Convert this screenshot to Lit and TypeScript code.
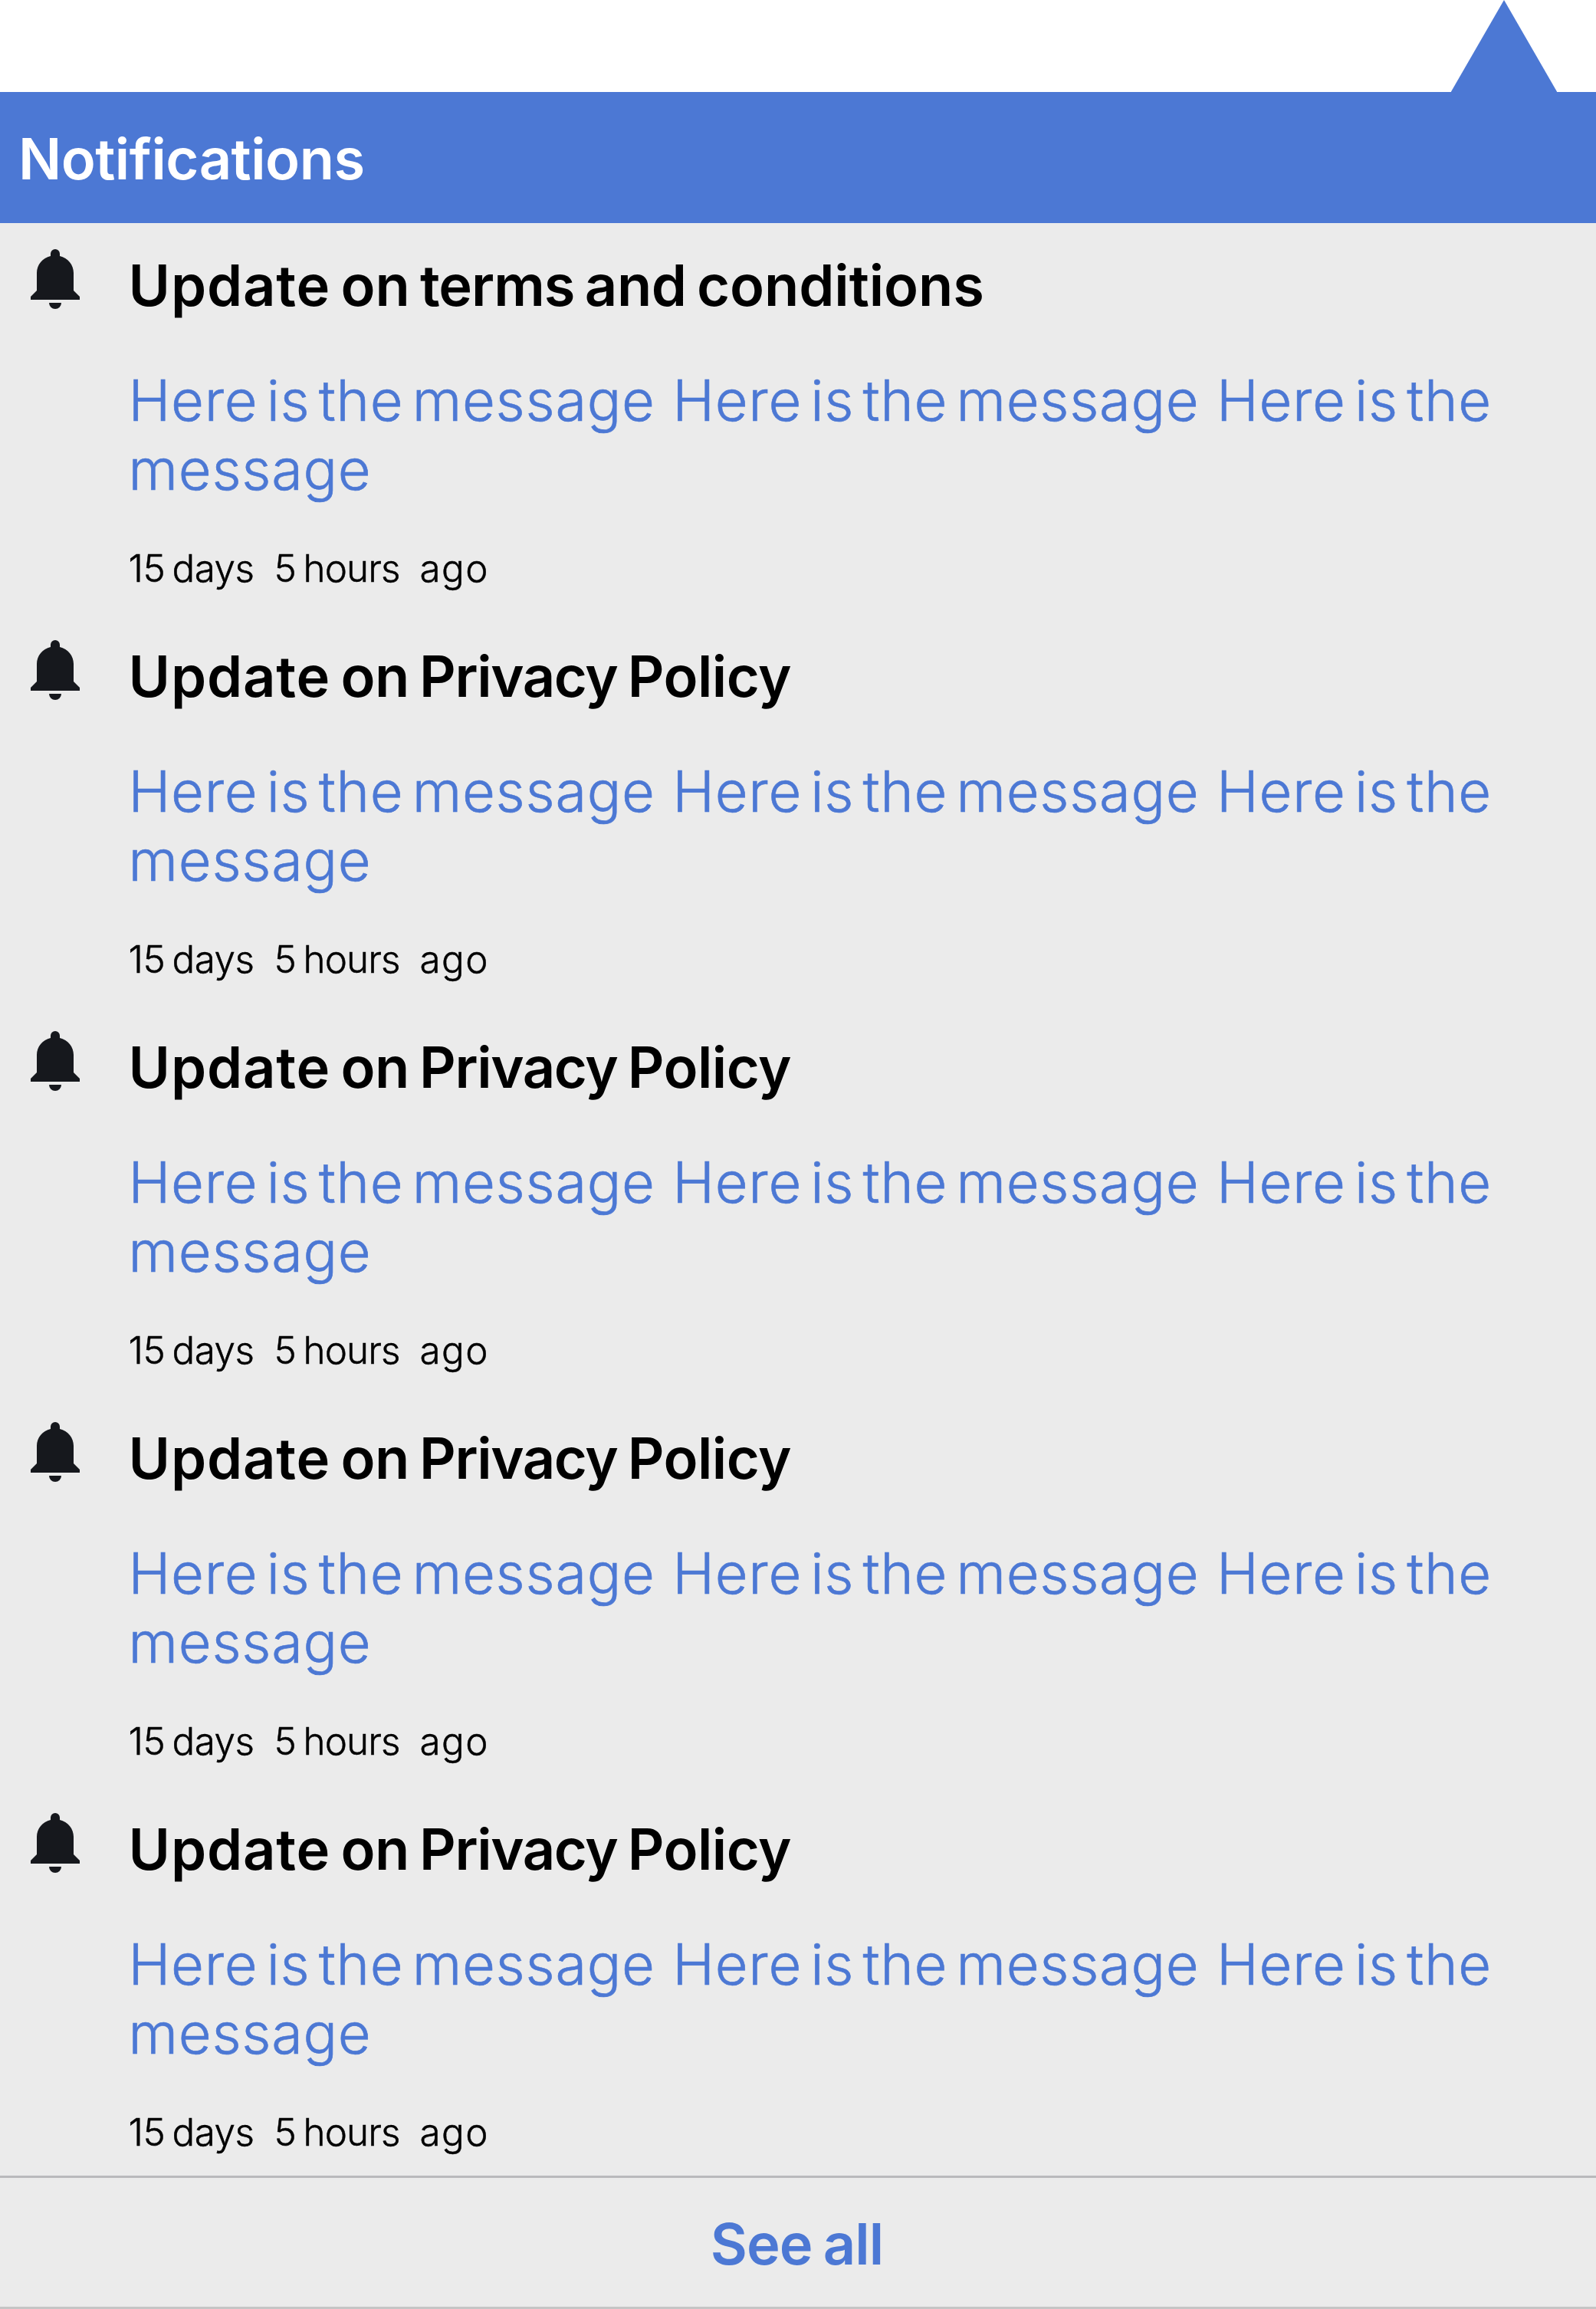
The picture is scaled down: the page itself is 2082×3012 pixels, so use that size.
import { LitElement, html, css, svg } from 'lit';
import { customElement, property } from 'lit/decorators.js';
import { styleMap } from 'lit/directives/style-map.js';

interface Word {
  text: string;
  tracking: number;
}

interface Notice {
  title: Word[];
  message: string;
  age: string[];
}

const MESSAGE = 'Here is the message  Here is the message  Here is the message';
const AGE = ['15 days', '5 hours', 'ago'];

const TERMS: Word[] = [
  { text: 'Update', tracking: 0.85 },
  { text: 'on', tracking: -0.15 },
  { text: 'terms', tracking: -1 },
  { text: 'and', tracking: -0.4 },
  { text: 'conditions', tracking: -0.05 },
];

const PRIVACY: Word[] = [
  { text: 'Update', tracking: 0.85 },
  { text: 'on', tracking: -0.6 },
  { text: 'Privacy', tracking: -1.35 },
  { text: 'Policy', tracking: -0.5 },
];

const NOTICES: Notice[] = [TERMS, PRIVACY, PRIVACY, PRIVACY, PRIVACY].map((title) => ({
  title,
  message: MESSAGE,
  age: AGE,
}));

const bell = svg`
  <path d="M26 9V6a6 6 0 0 1 12 0v3C48.500 11.500 56 20.500 56 31V54L64 62V66H0V62L8 54V31C8 20.500 15.500 11.500 26 9Z"/>
  <path d="M24 70H40A8 8 0 0 1 24 70Z"/>`;

@customElement('notice-row')
class NoticeRow extends LitElement {
  @property({ attribute: false }) notice!: Notice;

  static styles = css`
    :host {
      display: flex;
      height: 510px;
      box-sizing: border-box;
      padding: 34px 0 0 40px;
    }
    .bell {
      flex: none;
      width: 64px;
      height: 78px;
      fill: #16181d;
    }
    .body {
      flex: 1;
      min-width: 0;
      padding: 2px 60px 0 63.6px;
    }
    .title {
      font-size: 74px;
      line-height: 90px;
      font-weight: 600;
      word-spacing: -5.3px;
      color: #000;
    }
    .message {
      margin-top: 60px;
      font-size: 74px;
      line-height: 90px;
      font-weight: 300;
      letter-spacing: 0.7px;
      word-spacing: -10.2px;
      white-space: pre-wrap;
      color: #4c78d4;
      -webkit-text-stroke: 0.6px #4c78d4;
    }
    .age {
      display: grid;
      grid-template-columns: 190px 190px auto;
      margin-top: 54px;
      font-size: 49.3px;
      line-height: 60px;
      font-weight: 300;
      letter-spacing: -0.85px;
      word-spacing: -3.5px;
      color: #000;
      -webkit-text-stroke: 0.5px #000;
    }
    .age span:first-child {
      letter-spacing: -0.4px;
      word-spacing: -4.5px;
    }
    .age span:last-child {
      letter-spacing: 1.4px;
    }
  `;

  render() {
    const { title, message, age } = this.notice;
    return html`
      <svg class="bell" viewBox="0 0 64 78">${bell}</svg>
      <div class="body">
        <div class="title">${title.map(
          (w, i) => html`${i ? ' ' : ''}<span style=${styleMap({ letterSpacing: `${w.tracking}px` })}>${w.text}</span>`,
        )}</div>
        <div class="message">${message}</div>
        <div class="age">${age.map((part) => html`<span>${part}</span>`)}</div>
      </div>
    `;
  }
}

@customElement('app-root')
class AppRoot extends LitElement {
  static styles = css`
    :host {
      display: flex;
      flex-direction: column;
      width: 2082px;
      height: 3012px;
      overflow: hidden;
      background: #fff;
      font-family: Inter, 'Open Sans', sans-serif;
    }
    .pointer {
      flex: none;
      align-self: flex-end;
      width: 138.56px;
      height: 120px;
      margin-right: 50.72px;
      background: #4c78d4;
      clip-path: polygon(50% 0, 100% 100%, 0 100%);
    }
    .header {
      flex: none;
      box-sizing: border-box;
      height: 171px;
      padding: 42px 0 0 24px;
      background: #4c78d4;
      color: #fff;
      font-size: 74px;
      line-height: 90px;
      font-weight: 600;
      letter-spacing: -0.5px;
    }
    .list {
      flex: none;
      height: 2547px;
      background: #ebebeb;
    }
    .footer {
      flex: none;
      box-sizing: border-box;
      height: 174px;
      padding: 41px 3px 0 0;
      border-top: 3px solid #b9b9bc;
      border-bottom: 3px solid #c5c5c5;
      background: #ebebeb;
      color: #4c78d4;
      text-align: center;
      font-size: 74px;
      line-height: 90px;
      font-weight: 600;
      letter-spacing: -0.95px;
      word-spacing: -3.5px;
    }
  `;

  render() {
    return html`
      <div class="pointer"></div>
      <div class="header">Notifications</div>
      <div class="list">${NOTICES.map((n) => html`<notice-row .notice=${n}></notice-row>`)}</div>
      <div class="footer">See all</div>
    `;
  }
}
